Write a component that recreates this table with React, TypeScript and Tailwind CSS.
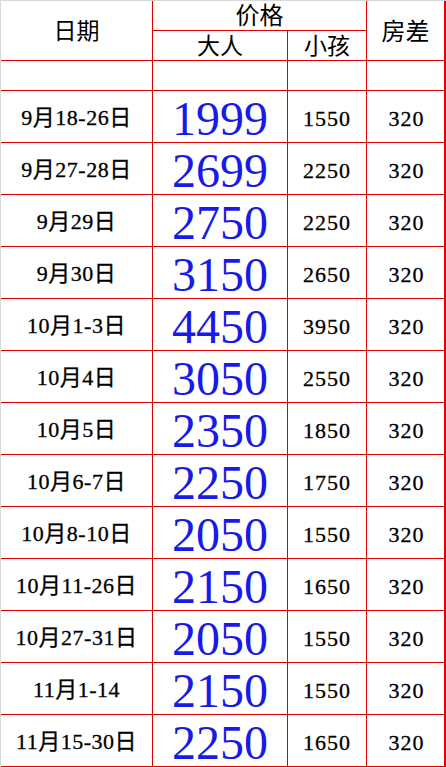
import React from "react";

const rows: [string, string, string][] = [
  ["9月18-26日", "1999", "1550"],
  ["9月27-28日", "2699", "2250"],
  ["9月29日", "2750", "2250"],
  ["9月30日", "3150", "2650"],
  ["10月1-3日", "4450", "3950"],
  ["10月4日", "3050", "2550"],
  ["10月5日", "2350", "1850"],
  ["10月6-7日", "2250", "1750"],
  ["10月8-10日", "2050", "1550"],
  ["10月11-26日", "2150", "1650"],
  ["10月27-31日", "2050", "1550"],
  ["11月1-14", "2150", "1550"],
  ["11月15-30日", "2250", "1650"],
];

const font = { fontFamily: '"Liberation Serif", "Noto Sans CJK SC", serif' };

export default function App() {
  return (
    <div className="w-[446px] h-[767px] bg-white" style={font}>
      <div className="w-[446px] h-[767px] border-t border-l border-[#d8d8d8] bg-[#e00000] pr-[2px] pb-px grid grid-cols-[151px_134px_78px_77px] grid-rows-[29px_29px_29px_repeat(13,51px)] gap-px">
        <div className="row-span-2 bg-white flex items-center justify-center text-[23px] text-black pt-[3px]">日期</div>
        <div className="col-span-2 bg-white flex items-center justify-center text-[24px] text-black">价格</div>
        <div className="row-span-2 bg-white flex items-center justify-center text-[24px] text-black pt-[2px]">房差</div>
        <div className="bg-white flex items-center justify-center text-[23px] text-black pt-[3px]">大人</div>
        <div className="bg-white flex items-center justify-center text-[23px] text-black pt-[3px]">小孩</div>
        <div className="bg-white" />
        <div className="bg-white" />
        <div className="bg-white" />
        <div className="bg-white" />
        {rows.map(([d, a, c]) => (
          <React.Fragment key={d}>
            <div className="bg-white flex items-center justify-center text-[22px] leading-[28px] tracking-[0.5px] text-black pt-[3px] [-webkit-text-stroke:0.3px_black]">{d}</div>
            <div className="bg-white flex items-center justify-center pt-[5px]">
              <span className="text-[48px] leading-[42px] text-[#1a1ae8]">{a}</span>
            </div>
            <div className="bg-white flex items-center justify-center text-[22px] leading-[28px] tracking-[1px] text-black pt-[4px] [-webkit-text-stroke:0.3px_black]">{c}</div>
            <div className="bg-white flex items-center justify-center text-[22px] leading-[28px] tracking-[1px] text-black pt-[4px] pl-[2px] [-webkit-text-stroke:0.3px_black]">320</div>
          </React.Fragment>
        ))}
      </div>
    </div>
  );
}
